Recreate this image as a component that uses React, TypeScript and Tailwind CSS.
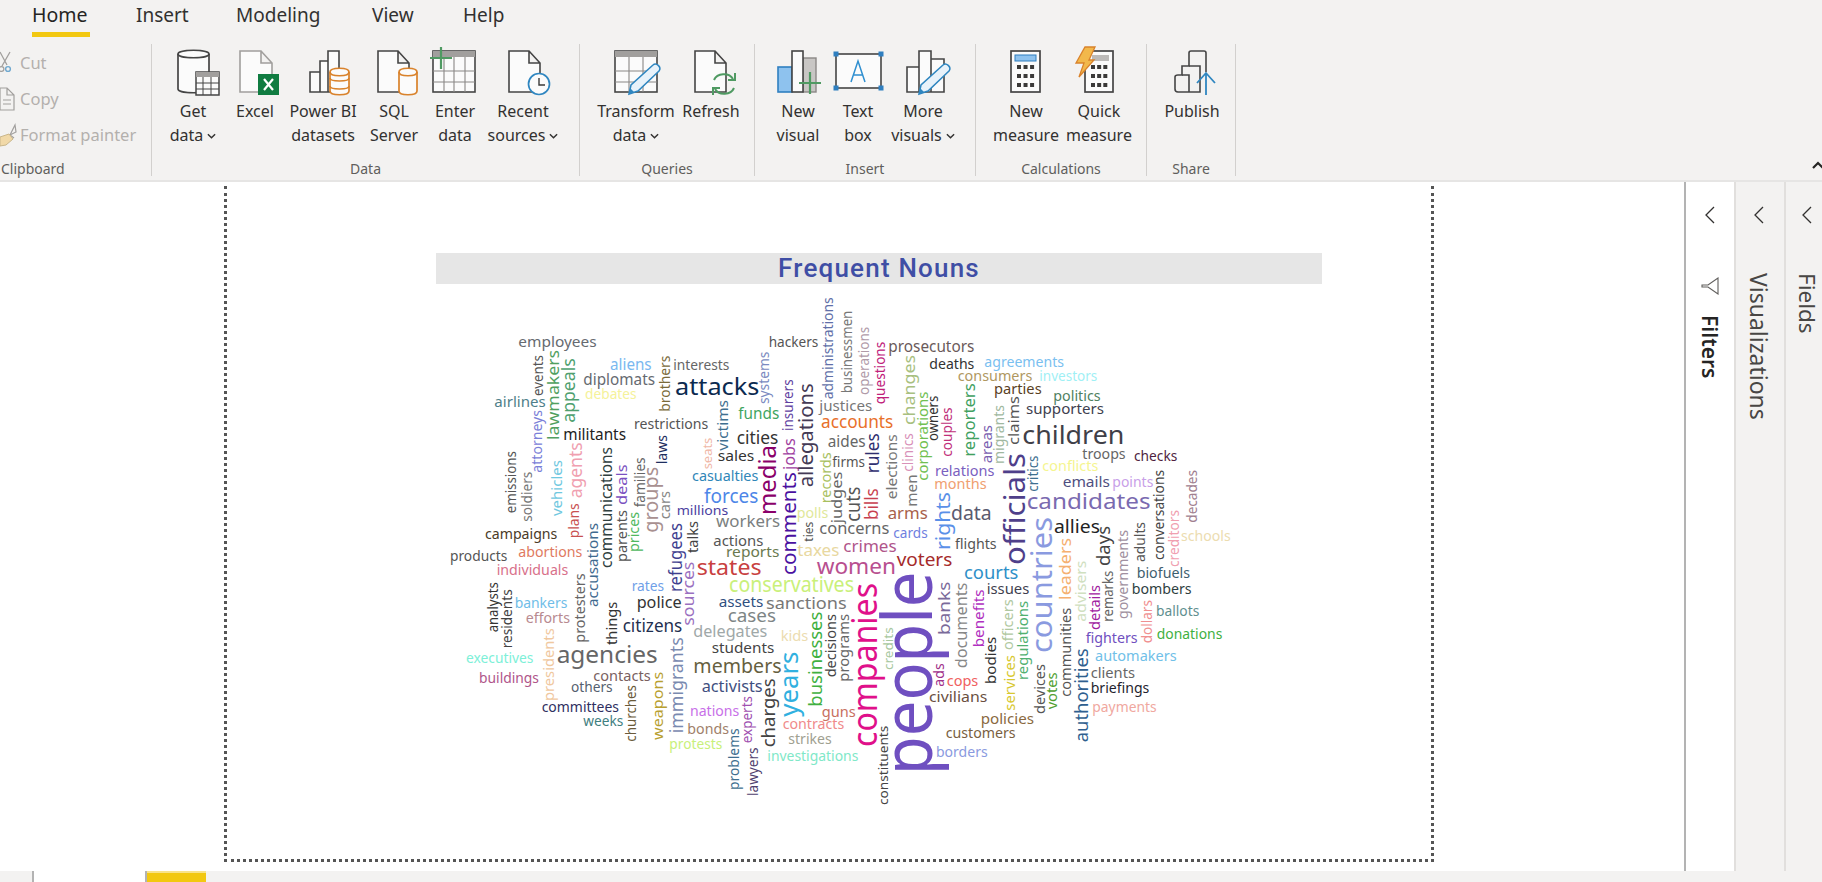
import React from 'react'

type Word = [string, number, number, number, number, string]

// a0 > a1 means the word runs bottom-to-top. b is the baseline.
const page: Word[] = [
  ['communications', 568, 447, 612, 17, '#2f3f3f'],
  ['accusations', 607, 523, 598, 15, '#3f6a8f'],
  ['parents', 562, 510, 627, 15, '#555555'],
  ['prices', 552, 512, 639, 15, '#4fb860'],
  ['comments', 575, 472, 796, 22, '#4a10a0'],
  ['refugees', 592, 523, 682, 19, '#3f3f8f'],
  ['talks', 553, 521, 698, 15, '#444444'],
  ['officials', 565, 453, 1025, 31, '#4f3f8a'],
  ['rights', 550, 492, 950, 22, '#5a90e8'],
  ['countries', 653, 517, 1052, 31, '#8a9ae0'],
  ['leaders', 600, 538, 1071, 18, '#f5b070'],
  ['days', 566, 526, 1110, 19, '#444444'],
  ['governments', 619, 530, 1128, 15, '#a090a0'],
  ['adults', 562, 522, 1145, 15, '#555555'],
  ['conversations', 560, 470, 1164, 15, '#444444'],
  ['creditors', 567, 510, 1179, 15, '#f0a0b0'],
  ['companies', 747, 583, 877, 34, '#e0108a'],
]

const topLeft: Word[] = [
  ['employees', 115, 350, 172, 16, '#666a70'],
  ['hackers', 866, 1015, 172, 16, '#555555'],
  ['aliens', 390, 515, 240, 17, '#7ab8f0'],
  ['interests', 580, 748, 240, 15, '#666666'],
  ['diplomats', 310, 525, 285, 18, '#666a70'],
  ['attacks', 585, 838, 315, 26, '#0b2a50'],
  ['debates', 315, 470, 326, 15, '#f5f29a'],
  ['airlines', 43, 197, 352, 16, '#4f7f8a'],
  ['funds', 775, 898, 387, 17, '#3fa55f'],
  ['justices', 1018, 1177, 362, 16, '#777777'],
  ['restrictions', 462, 685, 417, 15, '#555555'],
  ['accounts', 1023, 1240, 413, 19, '#e8702a'],
  ['militants', 250, 438, 450, 17, '#222222'],
  ['cities', 770, 895, 462, 19, '#333333'],
  ['aides', 1043, 1157, 470, 17, '#666666'],
  ['sales', 713, 823, 512, 16, '#333333'],
  ['firms', 1057, 1155, 530, 15, '#555555'],
  ['casualties', 636, 835, 572, 15, '#2f86b8'],
  ['forces', 672, 835, 638, 21, '#4d86e8'],
  ['millions', 590, 745, 675, 14, '#4b3f9f'],
  ['workers', 708, 900, 712, 18, '#7b8080'],
  ['campaigns', 15, 232, 747, 15, '#4a3a28'],
  ['polls', 950, 1045, 685, 15, '#dfe89a'],
  ['concerns', 1018, 1228, 733, 18, '#666666'],
  ['actions', 700, 850, 768, 15, '#555555'],
  ['events', 318, 195, 190, 15, '#555555'],
  ['attorneys', 548, 360, 185, 15, '#7a80d8'],
  ['lawmakers', 450, 180, 238, 18, '#50a060'],
  ['appeals', 398, 205, 285, 19, '#4f9f6f'],
  ['emissions', 670, 483, 108, 15, '#555555'],
  ['soldiers', 695, 545, 155, 15, '#777777'],
  ['vehicles', 678, 510, 245, 16, '#70c8e0'],
  ['agents', 625, 457, 305, 19, '#f0a0b0'],
  ['plans', 745, 640, 298, 15, '#c85050'],
  ['deals', 645, 523, 441, 16, '#7a50c0'],
  ['families', 652, 502, 495, 15, '#666666'],
  ['groups', 728, 530, 535, 22, '#a89090'],
  ['cars', 688, 603, 570, 15, '#888888'],
  ['laws', 523, 435, 560, 15, '#1f2f5f'],
  ['brothers', 365, 197, 570, 15, '#7a6a3a'],
  ['seats', 538, 443, 695, 14, '#f0b8a8'],
  ['victims', 482, 330, 745, 16, '#3f6f8f'],
  ['systems', 342, 185, 868, 15, '#7a8ac0'],
  ['insurers', 423, 268, 940, 15, '#5f3f9f'],
  ['jobs', 540, 445, 945, 17, '#a03f9f'],
  ['allegations', 592, 280, 1000, 22, '#443a55'],
  ['media', 675, 465, 888, 25, '#8a006a'],
  ['administrations', 328, 22, 1060, 15, '#5f6fa8'],
  ['businessmen', 310, 62, 1115, 15, '#777777'],
  ['operations', 315, 110, 1168, 15, '#b09aa8'],
  ['records', 640, 487, 1052, 15, '#a8c060'],
  ['judges', 700, 545, 1087, 16, '#666666'],
  ['cuts', 695, 590, 1140, 21, '#555555'],
  ['ties', 755, 695, 1000, 14, '#555555'],
]

const topRight: Word[] = [
  ['prosecutors', 85, 343, 185, 17, '#6a5a5a'],
  ['deaths', 208, 343, 238, 15, '#333333'],
  ['agreements', 373, 612, 230, 15, '#7ac0f0'],
  ['consumers', 293, 517, 273, 15, '#b0985f'],
  ['investors', 538, 712, 272, 15, '#9ff0f5'],
  ['parties', 402, 545, 313, 16, '#5a3f1f'],
  ['politics', 580, 722, 333, 15, '#4f7f5f'],
  ['supporters', 498, 732, 372, 16, '#3f3f4f'],
  ['children', 487, 793, 463, 28, '#3f4048'],
  ['troops', 667, 797, 507, 16, '#666666'],
  ['checks', 822, 952, 514, 15, '#4f1f3f'],
  ['conflicts', 547, 715, 542, 15, '#f5f590'],
  ['relations', 225, 403, 557, 15, '#7a60c0'],
  ['months', 223, 380, 598, 15, '#f0a070'],
  ['emails', 608, 750, 592, 15, '#4f4f7f'],
  ['points', 757, 880, 592, 15, '#c8a0e8'],
  ['candidates', 500, 872, 658, 24, '#7a6ab0'],
  ['data', 273, 395, 690, 21, '#5a5a6f'],
  ['arms', 83, 203, 686, 18, '#a8604a'],
  ['allies', 582, 720, 730, 20, '#222222'],
  ['cards', 100, 203, 745, 15, '#6f80e0'],
  ['flights', 285, 410, 778, 15, '#555555'],
  ['schools', 963, 1112, 752, 15, '#ecdcb0'],
  ['questions', 343, 155, 75, 15, '#c0207a'],
  ['changes', 405, 195, 165, 18, '#a8c080'],
  ['corporations', 572, 305, 203, 15, '#70c050'],
  ['owners', 453, 317, 235, 15, '#333333'],
  ['couples', 500, 352, 275, 15, '#c0307a'],
  ['reporters', 500, 280, 345, 17, '#40a060'],
  ['areas', 520, 405, 395, 15, '#7a60b0'],
  ['migrants', 522, 345, 432, 15, '#a0b8a0'],
  ['claims', 465, 318, 477, 16, '#555555'],
  ['critics', 605, 497, 535, 15, '#3f6f8f'],
  ['rules', 550, 430, 58, 19, '#2f2f6f'],
  ['elections', 628, 433, 112, 15, '#777777'],
  ['clinics', 545, 430, 160, 15, '#d890b8'],
  ['men', 650, 553, 172, 16, '#777777'],
  ['bills', 690, 595, 55, 19, '#c83f4f'],
  ['decades', 698, 540, 1012, 15, '#a08090'],
]

const bottomLeft: Word[] = [
  ['reports', 738, 898, 50, 16, '#6a7a4f'],
  ['taxes', 952, 1078, 47, 17, '#e8d8a0'],
  ['crimes', 1090, 1250, 35, 18, '#b0558a'],
  ['abortions', 115, 307, 50, 15, '#e07a5f'],
  ['products', -90, 82, 62, 15, '#555555'],
  ['individuals', 50, 265, 105, 15, '#d8708a'],
  ['rates', 455, 552, 152, 15, '#6fa0e8'],
  ['states', 650, 845, 105, 23, '#c84040'],
  ['women', 1010, 1248, 103, 23, '#b84f8f'],
  ['conservatives', 747, 1122, 157, 23, '#c9f07a'],
  ['police', 470, 605, 205, 17, '#333333'],
  ['assets', 716, 850, 200, 16, '#2f4f7f'],
  ['sanctions', 858, 1100, 206, 18, '#777777'],
  ['bankers', 104, 262, 205, 15, '#6fbde8'],
  ['efforts', 137, 270, 248, 15, '#b88a90'],
  ['cases', 743, 888, 245, 19, '#7d8585'],
  ['citizens', 428, 607, 275, 19, '#1f2f4f'],
  ['delegates', 640, 862, 292, 17, '#a0a8a8'],
  ['kids', 902, 985, 302, 16, '#ecdcb0'],
  ['students', 695, 883, 340, 16, '#444444'],
  ['agencies', 230, 533, 370, 26, '#666666'],
  ['members', 640, 905, 400, 22, '#665f3f'],
  ['executives', -42, 160, 368, 15, '#7df0d8'],
  ['buildings', -3, 177, 430, 15, '#b0558a'],
  ['contacts', 340, 512, 422, 15, '#7a5f5f'],
  ['activists', 665, 848, 455, 17, '#3f4f7f'],
  ['others', 273, 398, 455, 15, '#555f6f'],
  ['committees', 185, 417, 515, 15, '#2f2f5f'],
  ['nations', 630, 778, 527, 15, '#c870e8'],
  ['guns', 1025, 1127, 532, 16, '#c8705f'],
  ['weeks', 310, 430, 557, 15, '#3f7f7f'],
  ['contracts', 908, 1093, 568, 15, '#f08a8a'],
  ['bonds', 622, 747, 583, 15, '#a07f6a'],
  ['strikes', 925, 1055, 613, 15, '#a0a090'],
  ['protests', 568, 727, 627, 15, '#c8f07a'],
  ['investigations', 862, 1135, 663, 15, '#80e8c8'],
  ['analysts', 277, 127, 55, 15, '#333333'],
  ['residents', 325, 148, 97, 15, '#444444'],
  ['protesters', 308, 100, 315, 15, '#666666'],
  ['sources', 257, 65, 642, 17, '#9a70c0'],
  ['things', 315, 185, 412, 16, '#333333'],
  ['presidents', 483, 265, 222, 15, '#f0c8a0'],
  ['churches', 605, 435, 468, 15, '#6a5a3a'],
  ['weapons', 600, 395, 550, 16, '#b8a030'],
  ['immigrants', 580, 292, 608, 19, '#7a8ab0'],
  ['charges', 622, 415, 885, 19, '#444444'],
  ['years', 530, 335, 955, 27, '#30b0e0'],
  ['businesses', 500, 215, 1025, 19, '#40b040'],
  ['decisions', 412, 222, 1067, 15, '#444444'],
  ['programs', 425, 222, 1108, 15, '#666666'],
  ['problems', 750, 565, 778, 15, '#3f6f8f'],
  ['experts', 610, 468, 815, 15, '#a050b0'],
  ['lawyers', 768, 622, 835, 15, '#4f3f6f'],
]

const bottomRight: Word[] = [
  ['voters', 110, 277, 77, 20, '#a52a2a'],
  ['courts', 312, 475, 118, 19, '#2f90c8'],
  ['biofuels', 830, 990, 115, 15, '#3f5f6f'],
  ['bombers', 815, 995, 163, 16, '#2f3f3f'],
  ['issues', 380, 508, 163, 16, '#3f3f4f'],
  ['ballots', 888, 1018, 227, 15, '#5f8f8f'],
  ['donations', 890, 1087, 298, 15, '#3fb03f'],
  ['fighters', 677, 833, 310, 16, '#7050c0'],
  ['automakers', 705, 950, 362, 16, '#70c0e8'],
  ['clients', 692, 825, 415, 16, '#666666'],
  ['briefings', 692, 868, 460, 16, '#1f1f2f'],
  ['payments', 697, 890, 515, 15, '#f0a8a0'],
  ['cops', 260, 355, 437, 16, '#f05f5f'],
  ['civilians', 207, 382, 487, 16, '#6a4f3f'],
  ['policies', 362, 522, 552, 16, '#8a6a3f'],
  ['customers', 257, 467, 595, 15, '#7a5f3f'],
  ['borders', 228, 383, 652, 15, '#8a9ae0'],
  ['people', 705, 95, 215, 69, '#6f4fc0'],
  ['banks', 285, 125, 270, 18, '#7a6a9a'],
  ['documents', 385, 128, 322, 17, '#888888'],
  ['benefits', 322, 148, 373, 16, '#b030c0'],
  ['ads', 440, 370, 253, 15, '#a0308a'],
  ['bodies', 432, 290, 407, 16, '#333333'],
  ['officers', 330, 178, 458, 15, '#b0c8a0'],
  ['services', 512, 345, 466, 16, '#d8c830'],
  ['regulations', 420, 183, 505, 16, '#50b070'],
  ['devices', 522, 372, 555, 15, '#555555'],
  ['votes', 508, 397, 590, 15, '#50a030'],
  ['communities', 470, 203, 632, 15, '#555555'],
  ['authorities', 607, 325, 685, 19, '#2f5f8f'],
  ['advisers', 245, 62, 678, 15, '#d0e0c0'],
  ['details', 270, 135, 720, 15, '#a020a0'],
  ['remarks', 245, 92, 760, 15, '#666666'],
  ['dollars', 310, 180, 877, 15, '#f09090'],
  ['credits', 390, 262, 100, 14, '#a8c8a0'],
  ['constituents', 795, 557, 85, 14, '#444444'],
]

function WordGroup({ words, ox, oy, k }: { words: Word[]; ox: number; oy: number; k: number }) {
  return (
    <>
      {words.map(([w, a0, a1, b, size, color]) => {
        const vertical = a0 > a1
        const x = vertical ? ox + b / k : ox + a0 / k
        const y = vertical ? oy + a0 / k : oy + b / k
        return (
          <text
            key={w}
            x={x}
            y={y}
            fontSize={size < 33 ? size * 0.93 : size}
            fill={color}
            textLength={Math.abs(a1 - a0) / k}
            lengthAdjust="spacingAndGlyphs"
            transform={vertical ? `rotate(-90 ${x} ${y})` : undefined}
          >
            {w}
          </text>
        )
      })}
    </>
  )
}

function WordCloud() {
  return (
    <svg viewBox="436 284 886 560" className="block w-[886px] h-[560px]">
      <WordGroup words={page} ox={0} oy={0} k={1} />
      <WordGroup words={topLeft} ox={480} oy={290} k={3} />
      <WordGroup words={topRight} ox={860} oy={290} k={3} />
      <WordGroup words={bottomLeft} ox={480} oy={540} k={3} />
      <WordGroup words={bottomRight} ox={860} oy={540} k={3} />
    </svg>
  )
}

const line = '#454545'
const paper = '#fbfbfb'

function Doc({ x }: { x: number }) {
  return (
    <path
      d={`M${x} 51H${x + 20}L${x + 31} 63V92H${x}Z M${x + 20} 51V63H${x + 31}`}
      fill={paper}
      stroke={line}
      strokeWidth="1.6"
    />
  )
}

function Cylinder({ x, w, y, h, color, fill = paper }: { x: number; w: number; y: number; h: number; color: string; fill?: string }) {
  return (
    <>
      <path
        d={`M${x} ${y + 4}V${y + h - 4}C${x} ${y + h + 1} ${x + w} ${y + h + 1} ${x + w} ${y + h - 4}V${y + 4}C${x + w} ${y - 1} ${x} ${y - 1} ${x} ${y + 4}Z`}
        fill={fill}
        stroke={color}
        strokeWidth="1.7"
      />
      <path d={`M${x} ${y + 4}C${x} ${y + 9} ${x + w} ${y + 9} ${x + w} ${y + 4}`} fill="none" stroke={color} strokeWidth="1.7" />
    </>
  )
}

function Pencil({ x, y }: { x: number; y: number }) {
  // x,y is the tip
  return (
    <>
      <path
        d={`M${x} ${y}L${x + 2} ${y - 9}L${x + 24} ${y - 29}C${x + 27} ${y - 32} ${x + 33} ${y - 27} ${x + 30} ${y - 23}L${x + 9} ${y - 3}Z`}
        fill="#e8f2fa"
        stroke="#2f86c0"
        strokeWidth="1.5"
      />
      <path d={`M${x} ${y}L${x + 1} ${y - 6}L${x + 5} ${y - 2}Z`} fill="#2f86c0" />
    </>
  )
}

function Plus({ cx, cy, r }: { cx: number; cy: number; r: number }) {
  return <path d={`M${cx - r} ${cy}H${cx + r}M${cx} ${cy - r}V${cy + r}`} stroke="#4f9a62" strokeWidth="2.2" fill="none" />
}

function Calc({ x, w }: { x: number; w: number }) {
  const cols = [0, 1, 2].map(i => x + 6 + (i * (w - 12)) / 2.6)
  return (
    <>
      <rect x={x} y={51} width={w} height={41} fill={paper} stroke={line} strokeWidth="1.7" />
      {[65, 74, 83].map(y => cols.map(c => <rect key={`${y}-${c}`} x={c} y={y} width="4" height="4" fill="#3b3a39" />))}
    </>
  )
}

function Icon({ cx, children }: { cx: number; children: React.ReactNode }) {
  return (
    <svg viewBox={`${cx - 30} 46 60 50`} className="block w-[60px] h-[50px] shrink-0 overflow-visible">
      {children}
    </svg>
  )
}

function Caret() {
  return (
    <svg viewBox="0 0 10 6" className="w-[9px] h-[6px] ml-[4px] mt-[2px]">
      <path d="M1 1L5 5L9 1" fill="none" stroke="#323130" strokeWidth="1.6" />
    </svg>
  )
}

function RibbonButton({ w, lines, caret, children }: { w: string; lines: string[]; caret?: boolean; children: React.ReactNode }) {
  return (
    <div className={`flex flex-col items-center shrink-0 ${w}`}>
      <div className="mt-[2px] h-[50px] flex justify-center">{children}</div>
      <div className="mt-[3px] flex flex-col items-center text-[16px] leading-[24px] text-[#323130] whitespace-nowrap">
        {lines.map((l, i) => (
          <div key={l} className="flex items-center">
            {l}
            {caret && i === lines.length - 1 && <Caret />}
          </div>
        ))}
      </div>
    </div>
  )
}

function Group({ w, pad, label, children }: { w: string; pad: string; label: string; children: React.ReactNode }) {
  return (
    <div className={`flex flex-col h-[132px] shrink-0 border-r border-[#d2d0ce] ${w}`}>
      <div className={`flex flex-1 ${pad}`}>{children}</div>
      <div className="h-[14px] leading-[14px] text-[14px] text-center text-[#605e5c]">{label}</div>
    </div>
  )
}

function Ribbon() {
  return (
    <div className="h-[182px] bg-[#f3f2f1] border-b-2 border-[#e6e5e4] relative">
      <div className="flex h-[44px] pl-[32px] gap-12 text-[19px] text-[#323130]">
        <div className="flex flex-col w-[56px]">
          <div className="h-[32px] leading-[30px] text-[19.5px] text-[#252423]">Home</div>
          <div className="h-[5px] w-[58px] bg-[#f2c811]" />
        </div>
        <div className="h-[32px] w-[52px] leading-[30px]">Insert</div>
        <div className="h-[32px] w-[88px] leading-[30px]">Modeling</div>
        <div className="h-[32px] w-[43px] leading-[30px]">View</div>
        <div className="h-[32px] w-[42px] leading-[30px]">Help</div>
      </div>
      <div className="flex">
        <div className="flex flex-col h-[132px] w-[152px] shrink-0 border-r border-[#d2d0ce]">
          <div className="flex-1 flex flex-col pt-px text-[16.5px] leading-[36px] text-[#b3b0ad]">
            <div className="flex items-center">
              <svg viewBox="0 0 20 24" className="w-[20px] h-[24px] shrink-0">
                <path d="M0 1L7 14M10 1L2 15" stroke="#a19f9d" strokeWidth="1.3" fill="none" />
                <circle cx="1.5" cy="18" r="2.4" fill="none" stroke="#a19f9d" strokeWidth="1.2" />
                <circle cx="8" cy="18" r="2.4" fill="none" stroke="#6fa8cf" strokeWidth="1.4" />
              </svg>
              Cut
            </div>
            <div className="flex items-center">
              <svg viewBox="0 0 20 24" className="w-[20px] h-[24px] shrink-0">
                <path d="M0 1H7L14 8V23H0Z M7 1V8H14 M3 13H11M3 17H11" stroke="#a19f9d" strokeWidth="1.2" fill="none" />
              </svg>
              Copy
            </div>
            <div className="flex items-center">
              <svg viewBox="0 0 20 24" className="w-[20px] h-[24px] shrink-0">
                <path d="M10 12L15 2L16 9Z M10 12L14 15" stroke="#a19f9d" strokeWidth="1.2" fill="none" />
                <path d="M0 14L9 11L13 16L6 22L0 23Z" fill="#f1d9a8" stroke="#c9b68a" strokeWidth="1" />
              </svg>
              Format painter
            </div>
          </div>
          <div className="h-[14px] leading-[14px] text-[14px] pl-px text-[#605e5c]">Clipboard</div>
        </div>

        <Group w="w-[428px]" pad="pl-[14px]" label="Data">
          <RibbonButton w="w-[54px]" lines={['Get', 'data']} caret>
            <Icon cx={193}>
              <Cylinder x={178} w={31} y={50} h={43} color={line} />
              <rect x={196} y={72} width={23} height={23} fill={paper} stroke={line} strokeWidth="1.5" />
              <rect x={196} y={72} width={23} height={5} fill="#a19f9d" />
              <path d="M196 83H219M196 89H219M203 77V95M211 77V95" stroke={line} strokeWidth="1" />
            </Icon>
          </RibbonButton>
          <RibbonButton w="w-[70px]" lines={['Excel']}>
            <Icon cx={255}>
              <path d="M240 51H261L272 63V92H240Z M261 51V63H272" fill={paper} stroke="#a19f9d" strokeWidth="1.6" />
              <rect x={258} y={74} width={21} height={21} fill="#107c41" />
              <path d="M264 79L273 90M273 79L264 90" stroke="#ffffff" strokeWidth="2.2" />
            </Icon>
          </RibbonButton>
          <RibbonButton w="w-[66px]" lines={['Power BI', 'datasets']}>
            <Icon cx={323}>
              <path d="M310 72H320V61H328V51H339V92H310Z M320 72V92M328 61V92" fill={paper} stroke={line} strokeWidth="1.6" />
              <Cylinder x={330} w={19} y={68} h={27} color="#d9822b" />
              <path d="M330 78C330 82 349 82 349 78M330 86C330 90 349 90 349 86" fill="none" stroke="#d9822b" strokeWidth="1.6" />
            </Icon>
          </RibbonButton>
          <RibbonButton w="w-[76px]" lines={['SQL', 'Server']}>
            <Icon cx={394}>
              <Doc x={378} />
              <Cylinder x={399} w={18} y={68} h={27} color="#d9822b" />
            </Icon>
          </RibbonButton>
          <RibbonButton w="w-[46px]" lines={['Enter', 'data']}>
            <Icon cx={455}>
              <rect x={433} y={51} width={42} height={41} fill={paper} stroke={line} strokeWidth="1.6" />
              <rect x={433} y={51} width={42} height={6} fill="#a19f9d" />
              <path d="M433 71H475M433 82H475M444 57V92M454 57V92M465 57V92" stroke="#8a8886" strokeWidth="1.1" />
              <Plus cx={441} cy={58} r={11} />
            </Icon>
          </RibbonButton>
          <RibbonButton w="w-[90px]" lines={['Recent', 'sources']} caret>
            <Icon cx={523}>
              <Doc x={509} />
              <circle cx={539} cy={84} r={10.5} fill={paper} stroke="#2f86c0" strokeWidth="1.7" />
              <path d="M539 78V85H545" fill="none" stroke="#3b3a39" strokeWidth="1.4" />
            </Icon>
          </RibbonButton>
        </Group>

        <Group w="w-[175px]" pad="pl-[10px]" label="Queries">
          <RibbonButton w="w-[92px]" lines={['Transform', 'data']} caret>
            <Icon cx={636}>
              <rect x={615} y={51} width={42} height={41} fill={paper} stroke={line} strokeWidth="1.6" />
              <rect x={615} y={51} width={42} height={6} fill="#a19f9d" />
              <path d="M615 71H657M615 82H657M629 57V92M643 57V92" stroke="#8a8886" strokeWidth="1.1" />
              <Pencil x={629} y={94} />
            </Icon>
          </RibbonButton>
          <RibbonButton w="w-[58px]" lines={['Refresh']}>
            <Icon cx={711}>
              <Doc x={695} />
              <path d="M714 80C717 73 729 72 733 79M734 88C731 95 719 96 715 89" fill="none" stroke="#4f9a62" strokeWidth="2" />
              <path d="M728 80H735V73M720 88H713V95" fill="none" stroke="#4f9a62" strokeWidth="2" />
            </Icon>
          </RibbonButton>
        </Group>

        <Group w="w-[221px]" pad="pl-[13px]" label="Insert">
          <RibbonButton w="w-[60px]" lines={['New', 'visual']}>
            <Icon cx={798}>
              <rect x={778} y={67} width={14} height={25} fill="#8ec2ee" stroke="#2f7fc0" strokeWidth="1.6" />
              <rect x={803} y={58} width={13} height={34} fill="#c8c6c4" stroke="#8a8886" strokeWidth="1.4" />
              <rect x={792} y={51} width={11} height={41} fill={paper} stroke={line} strokeWidth="1.6" />
              <Plus cx={810} cy={83} r={11} />
            </Icon>
          </RibbonButton>
          <RibbonButton w="w-[60px]" lines={['Text', 'box']}>
            <Icon cx={858}>
              <rect x={836} y={54} width={45} height={34} fill={paper} stroke={line} strokeWidth="1.6" />
              {[[836, 54], [881, 54], [836, 88], [881, 88]].map(([x, y]) => (
                <rect key={`${x}${y}`} x={x - 2.5} y={y - 2.5} width="5" height="5" fill="#2f7fc0" />
              ))}
              <path d="M851 82L858 61L865 82M853.5 75H862.5" fill="none" stroke="#2f8fd0" strokeWidth="1.5" />
            </Icon>
          </RibbonButton>
          <RibbonButton w="w-[70px]" lines={['More', 'visuals']} caret>
            <Icon cx={923}>
              <path d="M907 67H919V51H931V59H944V92H907Z M919 67V92M931 59V92" fill={paper} stroke={line} strokeWidth="1.6" />
              <Pencil x={919} y={94} />
            </Icon>
          </RibbonButton>
        </Group>

        <Group w="w-[171px]" pad="pl-[14px]" label="Calculations">
          <RibbonButton w="w-[72px]" lines={['New', 'measure']}>
            <Icon cx={1026}>
              <Calc x={1011} w={29} />
              <rect x={1015} y={55} width={21} height={6} fill="#8ec2ee" stroke="#2f7fc0" strokeWidth="1" />
            </Icon>
          </RibbonButton>
          <RibbonButton w="w-[74px]" lines={['Quick', 'measure']}>
            <Icon cx={1099}>
              <Calc x={1085} w={28} />
              <rect x={1092} y={55} width={17} height={6} fill="#bdbbb9" />
              <path d="M1085 47H1095L1089 60H1094L1079 77L1084 63H1076Z" fill="#f2b84b" stroke="#d9822b" strokeWidth="1.3" />
            </Icon>
          </RibbonButton>
        </Group>

        <Group w="w-[89px]" pad="pl-[13px]" label="Share">
          <RibbonButton w="w-[64px]" lines={['Publish']}>
            <Icon cx={1192}>
              <path d="M1186 92H1178Q1175 92 1175 89V77Q1175 75 1178 75H1182V66H1189V53Q1189 51 1191 51H1204Q1206 51 1206 53V72" fill="none" stroke={line} strokeWidth="1.6" />
              <path d="M1182 75H1189V92M1189 66H1200V92H1186" fill="none" stroke={line} strokeWidth="1.6" />
              <path d="M1206 95V73M1197 83L1206 73L1215 83" fill="none" stroke="#2f86c0" strokeWidth="1.8" />
            </Icon>
          </RibbonButton>
        </Group>
      </div>
      <svg viewBox="0 0 12 8" className="absolute left-[1812px] top-[161px] w-[12px] h-[8px]">
        <path d="M1 7L6 2L11 7" fill="none" stroke="#252423" strokeWidth="2.2" />
      </svg>
    </div>
  )
}

function PaneChevron() {
  return (
    <svg viewBox="0 0 12 18" className="w-[12px] h-[18px] mt-[24px] shrink-0">
      <path d="M10 1L2 9L10 17" fill="none" stroke="#323130" strokeWidth="1.3" />
    </svg>
  )
}

export default function App() {
  return (
    <div className="w-[1822px] h-[882px] overflow-hidden bg-white [font-family:'Noto_Sans',sans-serif]">
      <Ribbon />
      <div className="flex h-[689px]">
        <div className="w-[1686px] shrink-0 border-r-2 border-[#b3b3b3]">
          <div className="ml-[224px] mt-[4px] w-[1210px] h-[676px] border-x-[3px] border-b-[3px] border-dotted border-[#555555] pl-[209px] pt-[67px]">
            <div className="w-[886px] h-[31px] bg-[#e6e6e6] flex items-center justify-center font-['Roboto'] font-medium text-[26px] tracking-[1.2px] text-[#3f4ea5]">
              Frequent Nouns
            </div>
            <WordCloud />
          </div>
        </div>
        <div className="w-[48px] shrink-0 flex flex-col items-center">
          <PaneChevron />
          <svg viewBox="0 0 18 18" className="w-[18px] h-[18px] mt-[53px]">
            <path d="M17 1V17L7 10H1V8H7Z" fill="none" stroke="#605e5c" strokeWidth="1.1" />
          </svg>
          <div className="mt-[20px] [writing-mode:vertical-rl] text-[21px] leading-[24px] font-semibold text-[#252423]">Filters</div>
        </div>
        <div className="w-[50px] shrink-0 flex flex-col items-center bg-[#f3f2f1] border-l-2 border-[#e1dfdd] pr-[3px]">
          <PaneChevron />
          <div className="mt-[49px] [writing-mode:vertical-rl] text-[23px] leading-[24px] text-[#484644]">Visualizations</div>
        </div>
        <div className="w-[38px] shrink-0 flex flex-col items-center bg-[#f3f2f1] border-l-2 border-[#e1dfdd] pl-[6px]">
          <PaneChevron />
          <div className="mt-[49px] [writing-mode:vertical-rl] text-[22.5px] leading-[24px] text-[#484644]">Fields</div>
        </div>
      </div>
      <div className="flex h-[11px] bg-[#f3f2f1]">
        <div className="w-[32px]" />
        <div className="w-[115px] bg-white border-x-2 border-[#b3b3b3]" />
        <div className="w-[59px] bg-[#f2c811] border-t-2 border-[#f8e38a]" />
      </div>
    </div>
  )
}
